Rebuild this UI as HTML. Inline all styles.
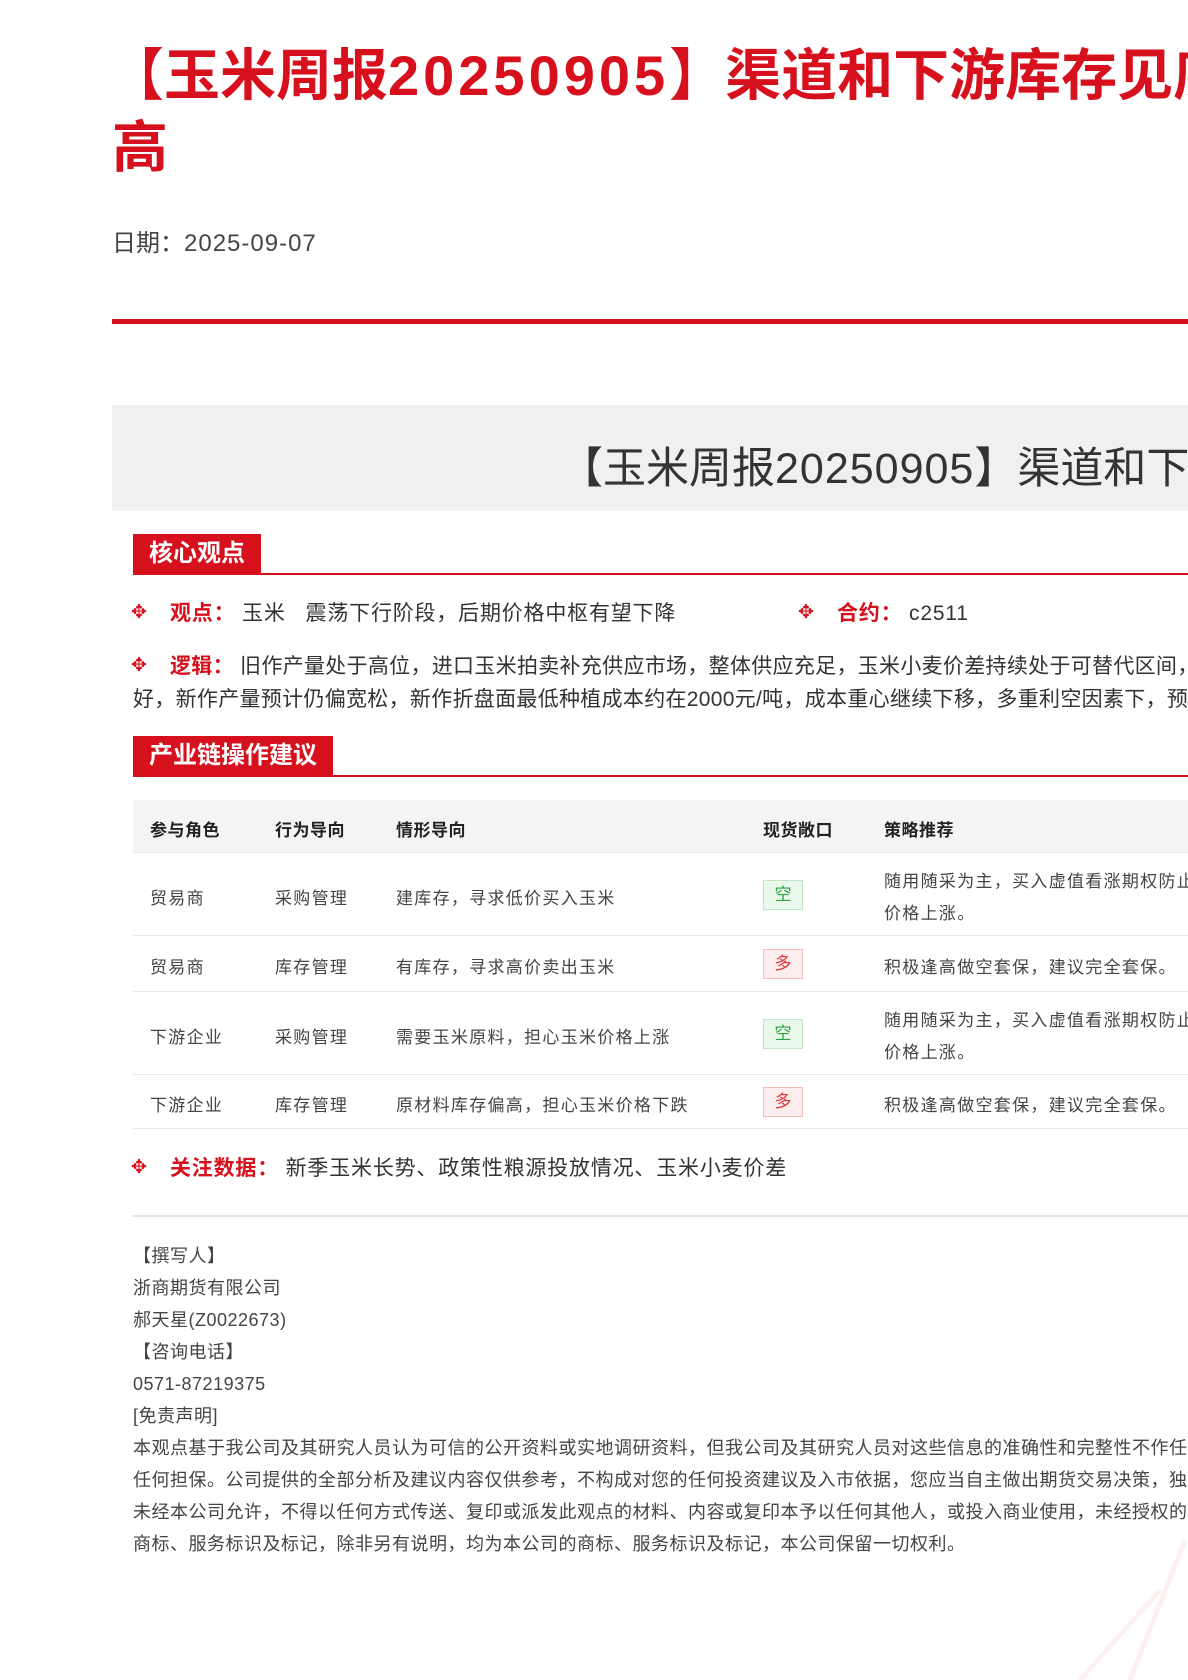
<!DOCTYPE html>
<html><head><meta charset="utf-8"><style>
html,body{margin:0;padding:0;width:1188px;height:1680px;overflow:hidden;background:#fff;position:relative;font-family:"Liberation Sans","Noto Sans CJK SC",sans-serif;color:#333}
.a{position:absolute;white-space:nowrap}
.title{font-size:56px;font-weight:bold;color:#d7101d;line-height:72px}
.d{letter-spacing:4px}
.tab{position:absolute;background:#d7101d;color:#fff;font-size:24px;font-weight:bold;line-height:40px;padding:0 16px}
.rl{position:absolute;left:133px;right:0;height:2px;background:#d7101d}
.lab{color:#d7101d;font-weight:bold}
.bul{color:#d7101d;font-size:19px}
.th{font-size:17px;font-weight:bold;color:#222;letter-spacing:.5px}
.td{font-size:17px;color:#444;letter-spacing:1.3px}
.badge{position:absolute;width:40px;height:30px;box-sizing:border-box;text-align:center;line-height:28px;font-size:17px}
.g{background:#eaf8ec;border:1px solid #bfe6c6;color:#2aa245}
.r{background:#fdeeee;border:1px solid #f5bcbc;color:#e0343a}
.hl{position:absolute;left:133px;right:0;height:1px;background:#e6e8eb}
.f{font-size:18px;color:#444;line-height:32px;letter-spacing:.5px}
.t21{font-size:21px;line-height:28px;letter-spacing:.8px}
</style></head><body>
<div class="a title" style="left:108px;top:40px">【玉米周报<span class="d">20250905</span>】渠道和下游库存见底，基差走</div>
<div class="a title" style="left:112px;top:112px">高</div>
<div class="a" style="left:112px;top:223px;font-size:24px;color:#444">日期：<span style="letter-spacing:1px">2025-09-07</span></div>
<div style="position:absolute;left:112px;right:0;top:319px;height:5px;background:#d7101d"></div>

<div style="position:absolute;left:112px;right:0;top:405px;height:106px;background:#f0f0f0"></div>
<div class="a" style="left:560px;top:434px;font-size:43px;color:#333">【玉米周报<span style="letter-spacing:1px">20250905</span>】渠道和下游库存见底</div>

<div class="tab" style="left:133px;top:534px">核心观点</div>
<div class="rl" style="top:573px"></div>
<div class="a" style="left:131px;top:600px;line-height:26px"><span class="bul">✥</span></div>
<div class="a t21" style="left:170px;top:600px"><span class="lab">观点：</span>&nbsp;玉米&nbsp;&nbsp;&nbsp;震荡下行阶段，后期价格中枢有望下降</div>
<div class="a" style="left:798px;top:600px;line-height:26px"><span class="bul">✥</span></div>
<div class="a t21" style="left:837px;top:600px"><span class="lab">合约：</span>&nbsp;c2511</div>
<div class="a" style="left:131px;top:653px;line-height:26px"><span class="bul">✥</span></div>
<div class="a t21" style="left:170px;top:653px;letter-spacing:.3px"><span class="lab">逻辑：</span>&nbsp;旧作产量处于高位，进口玉米拍卖补充供应市场，整体供应充足，玉米小麦价差持续处于可替代区间，下游需求偏</div>
<div class="a t21" style="left:133px;top:686px;letter-spacing:.3px">好，新作产量预计仍偏宽松，新作折盘面最低种植成本约在2000元/吨，成本重心继续下移，多重利空因素下，预计价格偏弱</div>

<div class="tab" style="left:133px;top:736px">产业链操作建议</div>
<div class="rl" style="top:775px"></div>

<div style="position:absolute;left:133px;right:0;top:800px;height:52px;background:#f3f4f6"></div>
<div class="a th" style="left:150px;top:816px">参与角色</div>
<div class="a th" style="left:275px;top:816px">行为导向</div>
<div class="a th" style="left:396px;top:816px">情形导向</div>
<div class="a th" style="left:763px;top:816px">现货敞口</div>
<div class="a th" style="left:884px;top:816px">策略推荐</div>
<div class="hl" style="top:852px"></div>

<div class="a td" style="left:150px;top:884px">贸易商</div>
<div class="a td" style="left:275px;top:884px">采购管理</div>
<div class="a td" style="left:396px;top:884px">建库存，寻求低价买入玉米</div>
<div class="badge g" style="left:763px;top:880px">空</div>
<div class="a td" style="left:884px;top:866px;line-height:32px">随用随采为主，买入虚值看涨期权防止<br>价格上涨。</div>
<div class="hl" style="top:935px"></div>

<div class="a td" style="left:150px;top:953px">贸易商</div>
<div class="a td" style="left:275px;top:953px">库存管理</div>
<div class="a td" style="left:396px;top:953px">有库存，寻求高价卖出玉米</div>
<div class="badge r" style="left:763px;top:949px">多</div>
<div class="a td" style="left:884px;top:953px">积极逢高做空套保，建议完全套保。</div>
<div class="hl" style="top:991px"></div>

<div class="a td" style="left:150px;top:1023px">下游企业</div>
<div class="a td" style="left:275px;top:1023px">采购管理</div>
<div class="a td" style="left:396px;top:1023px">需要玉米原料，担心玉米价格上涨</div>
<div class="badge g" style="left:763px;top:1019px">空</div>
<div class="a td" style="left:884px;top:1005px;line-height:32px">随用随采为主，买入虚值看涨期权防止<br>价格上涨。</div>
<div class="hl" style="top:1074px"></div>

<div class="a td" style="left:150px;top:1091px">下游企业</div>
<div class="a td" style="left:275px;top:1091px">库存管理</div>
<div class="a td" style="left:396px;top:1091px">原材料库存偏高，担心玉米价格下跌</div>
<div class="badge r" style="left:763px;top:1087px">多</div>
<div class="a td" style="left:884px;top:1091px">积极逢高做空套保，建议完全套保。</div>
<div class="hl" style="top:1128px"></div>

<div class="a" style="left:131px;top:1155px;line-height:26px"><span class="bul">✥</span></div>
<div class="a t21" style="left:170px;top:1155px"><span class="lab">关注数据：</span>&nbsp;新季玉米长势、政策性粮源投放情况、玉米小麦价差</div>
<div style="position:absolute;left:133px;right:0;top:1215px;height:2px;background:#e4e4e4"></div>

<div class="a f" style="left:133px;top:1240px">【撰写人】<br>浙商期货有限公司<br>郝天星(Z0022673)<br>【咨询电话】<br>0571-87219375<br>[免责声明]<br>本观点基于我公司及其研究人员认为可信的公开资料或实地调研资料，但我公司及其研究人员对这些信息的准确性和完整性不作任何保证<br>任何担保。公司提供的全部分析及建议内容仅供参考，不构成对您的任何投资建议及入市依据，您应当自主做出期货交易决策，独立承担<br>未经本公司允许，不得以任何方式传送、复印或派发此观点的材料、内容或复印本予以任何其他人，或投入商业使用，未经授权的<br>商标、服务标识及标记，除非另有说明，均为本公司的商标、服务标识及标记，本公司保留一切权利。</div>

<svg style="position:absolute;left:1000px;top:1520px" width="188" height="160"><path d="M185 20 L130 160 M160 70 L80 160" stroke="#fdf0f0" stroke-width="5" fill="none"/></svg>
</body></html>
